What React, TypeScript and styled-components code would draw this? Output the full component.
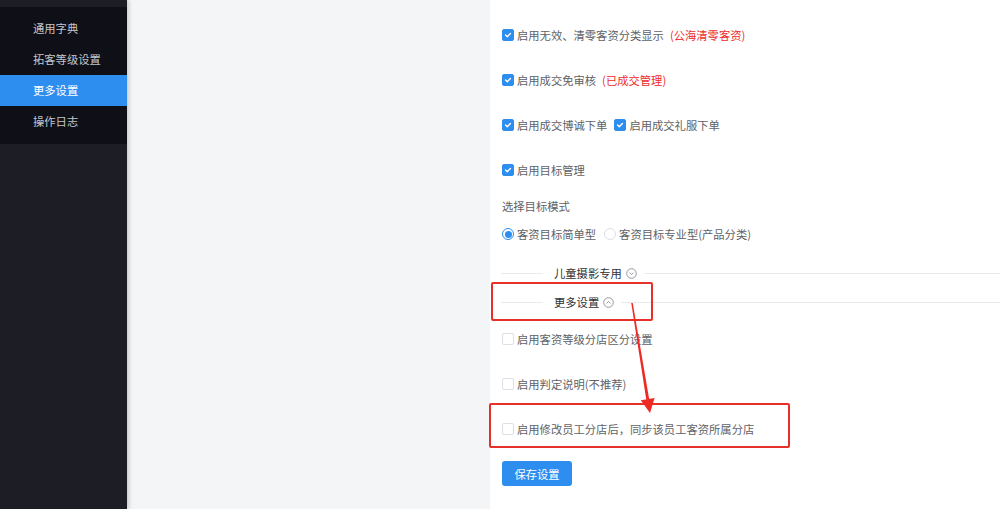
import React from "react";
import styled, { createGlobalStyle } from "styled-components";

const Global = createGlobalStyle`
  html, body { margin: 0; padding: 0; }
  body {
    width: 1000px; height: 509px; overflow: hidden;
    font-family: "Noto Sans CJK SC", "Noto Sans", "Liberation Sans", sans-serif;
    font-size: 11.3px;
    background: #fff;
  }
  #root { height: 509px; }
`;

const Page = styled.div`
  display: flex;
  height: 509px;
  width: 1000px;
`;

const Sidebar = styled.aside`
  width: 127px;
  flex: none;
  background: #1c1d25;
  padding-top: 7px;
  box-shadow: 2px 0 4px rgba(0, 0, 0, 0.18);
  position: relative;
  z-index: 1;
`;

const SubMenu = styled.ul`
  list-style: none;
  margin: 0;
  padding: 6px 0 7px;
  background: #0f1017;
`;

const MenuItem = styled.li<{ $active?: boolean }>`
  height: 31px;
  display: flex;
  align-items: center;
  padding-left: 33px;
  padding-bottom: 1px;
  box-sizing: border-box;
  color: ${(p) => (p.$active ? "#ffffff" : "#c4c6cc")};
  background: ${(p) => (p.$active ? "#2e8ef0" : "transparent")};
  font-size: 11.3px;
`;

const Gutter = styled.div`
  width: 363px;
  flex: none;
  background: #f4f5f7;
`;

const Panel = styled.main`
  flex: 1;
  background: #fff;
  position: relative;
  padding: 12px 0 0 12px;
  color: #606266;
`;

const Row = styled.div`
  height: 45px;
  display: flex;
  align-items: center;
`;

const CheckLabel = styled.label`
  display: inline-flex;
  align-items: center;
  margin-right: 7px;
  white-space: nowrap;
`;

const Box = styled.span<{ $checked?: boolean }>`
  width: 12px;
  height: 12px;
  box-sizing: border-box;
  border-radius: 2px;
  border: 1px solid ${(p) => (p.$checked ? "#2e8ef0" : "#dcdfe6")};
  background: ${(p) => (p.$checked ? "#2e8ef0" : "#fff")};
  display: inline-flex;
  align-items: center;
  justify-content: center;
  margin-right: 3px;
`;

const Hint = styled.span`
  color: #ee2b2b;
  margin-left: 6px;
`;

const FieldLabel = styled.div`
  height: 20px;
  line-height: 20px;
  margin-top: 4px;
`;

const RadioRow = styled.div`
  height: 20px;
  margin-top: 8px;
  display: flex;
  align-items: center;
`;

const RadioLabel = styled.label`
  display: inline-flex;
  align-items: center;
  margin-right: 8px;
  white-space: nowrap;
`;

const RadioDot = styled.span<{ $checked?: boolean }>`
  width: 12px;
  height: 12px;
  box-sizing: border-box;
  border-radius: 50%;
  border: 1px solid ${(p) => (p.$checked ? "#2e8ef0" : "#dcdfe6")};
  background: #fff;
  display: inline-flex;
  align-items: center;
  justify-content: center;
  margin-right: 3px;
  &::after {
    content: "";
    width: 7px;
    height: 7px;
    border-radius: 50%;
    background: ${(p) => (p.$checked ? "#2e8ef0" : "transparent")};
  }
`;

const Divider = styled.div<{ $mt: number }>`
  height: 28px;
  margin-top: ${(p) => p.$mt}px;
  display: flex;
  align-items: center;
  color: #303133;
`;

const LineLeft = styled.span`
  width: 42px;
  height: 1px;
  background: #e8eaec;
  margin-right: 11px;
  flex: none;
  margin-left: -1px;
`;

const LineRight = styled.span`
  flex: 1;
  height: 1px;
  background: #e8eaec;
  margin-left: 7px;
`;

const DivIcon = styled.svg`
  margin-left: 4px;
  flex: none;
`;

const Button = styled.button`
  margin-top: 10px;
  width: 70px;
  height: 25px;
  border: none;
  border-radius: 3px;
  background: #2e8ef0;
  color: #fff;
  font-family: inherit;
  font-size: 11.3px;
  padding: 0;
`;

const Mark = styled.div<{ $l: number; $t: number; $w: number; $h: number }>`
  position: absolute;
  left: ${(p) => p.$l}px;
  top: ${(p) => p.$t}px;
  width: ${(p) => p.$w}px;
  height: ${(p) => p.$h}px;
  box-sizing: border-box;
  border: 2px solid #e8302b;
  border-radius: 2px;
  pointer-events: none;
`;

const Arrow = styled.svg`
  position: absolute;
  left: 130px;
  top: 295px;
  pointer-events: none;
`;

const Tick = () => (
  <svg width="8" height="8" viewBox="0 0 8 8">
    <path d="M1.6 4.1 L3.3 5.7 L6.4 2.4" fill="none" stroke="#fff" strokeWidth="1.4" strokeLinecap="round" strokeLinejoin="round" />
  </svg>
);

const Check: React.FC<{ checked?: boolean; children: React.ReactNode }> = ({ checked, children }) => (
  <CheckLabel>
    <Box $checked={checked}>{checked && <Tick />}</Box>
    {children}
  </CheckLabel>
);

const Chevron: React.FC<{ up?: boolean }> = ({ up }) => (
  <DivIcon width="11" height="11" viewBox="0 0 11 11">
    <circle cx="5.5" cy="5.5" r="4.8" fill="none" stroke="#8c8f96" strokeWidth="0.9" />
    <path
      d={up ? "M3.6 6.4 L5.5 4.5 L7.4 6.4" : "M3.6 4.7 L5.5 6.6 L7.4 4.7"}
      fill="none"
      stroke="#8c8f96"
      strokeWidth="0.9"
    />
  </DivIcon>
);

export default function App() {
  return (
    <>
      <Global />
      <Page>
        <Sidebar>
          <SubMenu>
            <MenuItem>通用字典</MenuItem>
            <MenuItem>拓客等级设置</MenuItem>
            <MenuItem $active>更多设置</MenuItem>
            <MenuItem>操作日志</MenuItem>
          </SubMenu>
        </Sidebar>
        <Gutter />
        <Panel>
          <Row>
            <Check checked>
              启用无效、清零客资分类显示<Hint>(公海清零客资)</Hint>
            </Check>
          </Row>
          <Row>
            <Check checked>
              启用成交免审核<Hint>(已成交管理)</Hint>
            </Check>
          </Row>
          <Row>
            <Check checked>启用成交博诚下单</Check>
            <Check checked>启用成交礼服下单</Check>
          </Row>
          <Row>
            <Check checked>启用目标管理</Check>
          </Row>
          <FieldLabel>选择目标模式</FieldLabel>
          <RadioRow>
            <RadioLabel>
              <RadioDot $checked />
              客资目标简单型
            </RadioLabel>
            <RadioLabel>
              <RadioDot />
              客资目标专业型(产品分类)
            </RadioLabel>
          </RadioRow>
          <Divider $mt={15}>
            <LineLeft />
            儿童摄影专用
            <Chevron />
            <LineRight />
          </Divider>
          <Divider $mt={1}>
            <LineLeft />
            更多设置
            <Chevron up />
            <LineRight />
          </Divider>
          <Row>
            <Check>启用客资等级分店区分设置</Check>
          </Row>
          <Row>
            <Check>启用判定说明(不推荐)</Check>
          </Row>
          <Row>
            <Check>启用修改员工分店后，同步该员工客资所属分店</Check>
          </Row>
          <Button>保存设置</Button>

          <Mark $l={1} $t={282} $w={162} $h={39} />
          <Mark $l={-1} $t={403} $w={301} $h={45} />
          <Arrow width="45" height="125" viewBox="0 0 45 125">
            <polygon
              points="12.74,7.88 11.26,8.12 26.3,104.8 29.2,104.3"
              fill="#ee2a24"
            />
            <polygon points="30,118 20.8,105.3 34.6,103.1" fill="#ee2a24" />
          </Arrow>
        </Panel>
      </Page>
    </>
  );
}
